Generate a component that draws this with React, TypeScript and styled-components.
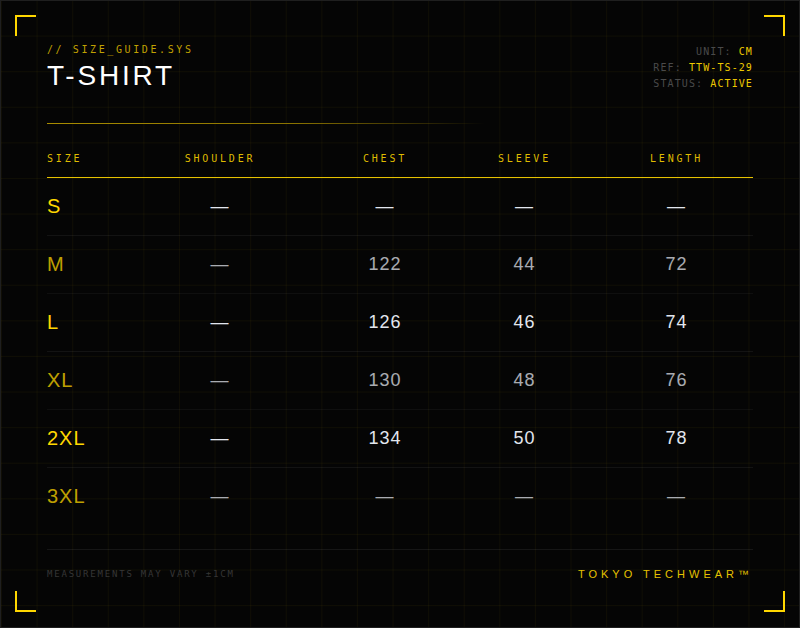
import React from "react";
import styled, { createGlobalStyle } from "styled-components";

const GlobalStyle = createGlobalStyle`
  html, body {
    margin: 0;
    padding: 0;
    background: #050505;
  }
  body {
    width: 800px;
    height: 628px;
    overflow: hidden;
  }
`;

const YELLOW = "#ffd700";
const MONO = `"DejaVu Sans Mono", "Liberation Mono", monospace`;
const SANS = `"Liberation Sans", Arial, sans-serif`;

const Card = styled.div`
  position: relative;
  box-sizing: border-box;
  width: 800px;
  height: 628px;
  border: 1px solid #1f1f1f;
  background-color: #050505;
  background-image: linear-gradient(rgba(255, 215, 0, 0.045) 1px, transparent 1px),
    linear-gradient(90deg, rgba(255, 215, 0, 0.045) 1px, transparent 1px);
  background-size: 35.6px 35.6px;
  background-position: 0 -1px;
  padding: 41px 46px 0;
  display: flex;
  flex-direction: column;
`;

const Corner = styled.span<{ $v: "top" | "bottom"; $h: "left" | "right" }>`
  position: absolute;
  width: 21px;
  height: 21px;
  box-sizing: border-box;
  ${(p) => (p.$v === "top" ? "top: 14px;" : "bottom: 15px;")}
  ${(p) => (p.$h === "left" ? "left: 14px;" : "right: 14px;")}
  border-${(p) => p.$v}: 2px solid ${YELLOW};
  border-${(p) => p.$h}: 2px solid ${YELLOW};
`;

const Header = styled.header`
  display: flex;
  justify-content: space-between;
  align-items: flex-start;
`;

const TitleBlock = styled.div`
  display: flex;
  flex-direction: column;
`;

const Subtitle = styled.div`
  font-family: ${MONO};
  font-size: 10px;
  letter-spacing: 2.6px;
  line-height: 13px;
  color: rgba(255, 215, 0, 0.75);
  margin: 1px 0 3px;
`;

const Title = styled.h1`
  margin: 0;
  font-family: ${SANS};
  font-weight: 400;
  font-size: 28px;
  letter-spacing: 2.8px;
  line-height: 34px;
  color: #ffffff;
`;

const Meta = styled.div`
  padding-top: 2px;
  text-align: right;
  font-family: ${MONO};
  font-size: 10px;
  letter-spacing: 1.1px;
  line-height: 16px;
  color: #4a4a4a;
`;

const MetaValue = styled.span`
  color: #eec900;
`;

const Divider = styled.div`
  height: 1px;
  margin: 30px 0 29px;
  background: linear-gradient(
    90deg,
    #a88c00 0%,
    #8a7300 35%,
    rgba(138, 115, 0, 0) 62%
  );
`;

const COLS = "72px 202px 128px 151px 153px";

const HeadRow = styled.div`
  display: grid;
  grid-template-columns: ${COLS};
  padding-bottom: 12px;
  border-bottom: 1px solid rgba(255, 215, 0, 0.9);
`;

const HeadCell = styled.div<{ $first?: boolean }>`
  font-family: ${MONO};
  font-size: 10px;
  letter-spacing: 2.8px;
  line-height: 12px;
  color: rgba(255, 215, 0, 0.88);
  text-align: ${(p) => (p.$first ? "left" : "center")};
`;

const Row = styled.div<{ $dim: boolean }>`
  display: grid;
  grid-template-columns: ${COLS};
  align-items: center;
  height: 57px;
  border-bottom: 1px solid rgba(255, 255, 255, 0.06);
  opacity: ${(p) => (p.$dim ? 0.74 : 1)};
  &:last-child {
    border-bottom: none;
  }
`;

const SizeCell = styled.div`
  font-family: ${SANS};
  font-size: 20px;
  letter-spacing: 1px;
  color: ${YELLOW};
`;

const ValueCell = styled.div`
  font-family: ${SANS};
  font-size: 18px;
  letter-spacing: 1px;
  color: #e2e6ee;
  text-align: center;
`;

const Footer = styled.footer`
  margin-top: 24px;
  padding-top: 18px;
  border-top: 1px solid rgba(255, 255, 255, 0.07);
  display: flex;
  justify-content: space-between;
  align-items: center;
  line-height: 12px;
`;

const Note = styled.div`
  font-family: ${MONO};
  font-size: 9px;
  letter-spacing: 1.8px;
  color: #363636;
`;

const Brand = styled.div`
  font-family: ${SANS};
  font-size: 11px;
  letter-spacing: 4px;
  color: #e6c200;
`;

const DASH = "—";

const rows: { size: string; values: string[] }[] = [
  { size: "S", values: [DASH, DASH, DASH, DASH] },
  { size: "M", values: [DASH, "122", "44", "72"] },
  { size: "L", values: [DASH, "126", "46", "74"] },
  { size: "XL", values: [DASH, "130", "48", "76"] },
  { size: "2XL", values: [DASH, "134", "50", "78"] },
  { size: "3XL", values: [DASH, DASH, DASH, DASH] },
];

const headers = ["SIZE", "SHOULDER", "CHEST", "SLEEVE", "LENGTH"];

export default function App() {
  return (
    <>
      <GlobalStyle />
      <Card>
        <Corner $v="top" $h="left" />
        <Corner $v="top" $h="right" />
        <Corner $v="bottom" $h="left" />
        <Corner $v="bottom" $h="right" />

        <Header>
          <TitleBlock>
            <Subtitle>// SIZE_GUIDE.SYS</Subtitle>
            <Title>T-SHIRT</Title>
          </TitleBlock>
          <Meta>
            <div>
              UNIT: <MetaValue>CM</MetaValue>
            </div>
            <div>
              REF: <MetaValue>TTW-TS-29</MetaValue>
            </div>
            <div>
              STATUS: <MetaValue>ACTIVE</MetaValue>
            </div>
          </Meta>
        </Header>

        <Divider />

        <div>
          <HeadRow>
            {headers.map((h, i) => (
              <HeadCell key={h} $first={i === 0}>
                {h}
              </HeadCell>
            ))}
          </HeadRow>
          {rows.map((r, i) => (
            <Row key={r.size} $dim={i % 2 === 1}>
              <SizeCell>{r.size}</SizeCell>
              {r.values.map((v, j) => (
                <ValueCell key={j}>{v}</ValueCell>
              ))}
            </Row>
          ))}
        </div>

        <Footer>
          <Note>MEASUREMENTS MAY VARY ±1CM</Note>
          <Brand>TOKYO TECHWEAR™</Brand>
        </Footer>
      </Card>
    </>
  );
}
